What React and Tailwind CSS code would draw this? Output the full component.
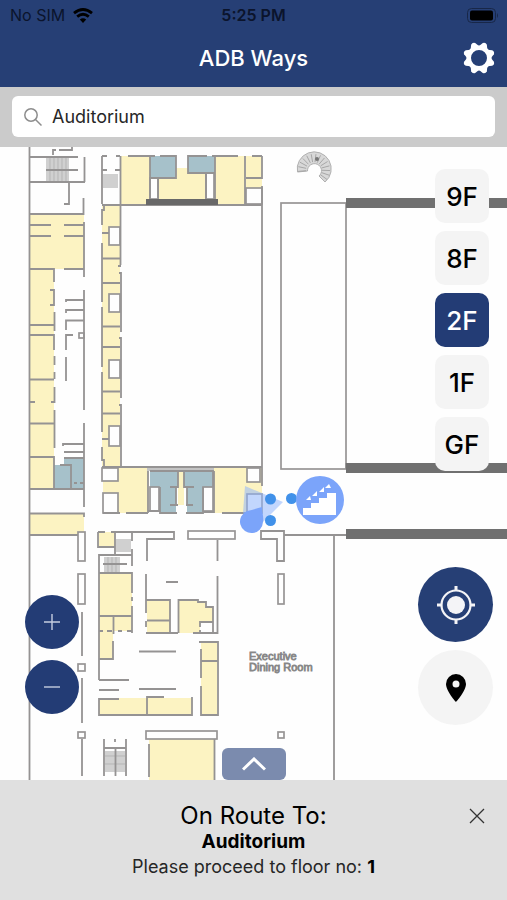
import React, { useState } from "react";

const YELLOW = [
  [30, 214, 54, 55], [30, 269, 24, 219], [30, 514, 54, 21], [102, 206, 18, 261],
  [121, 156, 29, 49], [158, 174, 48, 26], [176, 168, 12, 10], [215, 156, 30, 49], [246, 156, 16, 32],
  [103, 468, 45, 45], [178, 471, 6, 34], [214, 468, 48, 45],
  [99, 532, 16, 15], [99, 573, 33, 58], [99, 631, 14, 28], [99, 698, 93, 17],
  [147, 600, 23, 33], [201, 642, 16, 73], [149, 739, 65, 41],
];

const TEAL = [
  [64, 458, 20, 31], [54, 465, 12, 24], [150, 156, 26, 22], [188, 156, 27, 17],
  [150, 471, 28, 16], [160, 486, 16, 27], [184, 471, 29, 16], [187, 486, 15, 27],
];

const ROOMS = [
  [109, 227, 11, 18], [109, 294, 11, 18], [109, 360, 11, 18], [109, 426, 11, 20],
  [102, 468, 16, 13], [103, 493, 15, 20], [150, 487, 9, 24], [203, 487, 10, 24],
  [247, 468, 13, 14], [247, 494, 15, 19], [150, 178, 8, 21], [206, 173, 8, 26], [246, 188, 16, 16],
  [78, 532, 7, 29], [78, 574, 7, 30], [78, 664, 7, 7], [78, 732, 7, 6],
  [188, 531, 47, 8], [278, 574, 6, 30], [278, 732, 6, 6], [146, 731, 71, 8], [79, 333, 5, 5],
  [281, 203, 65, 266],
];

const STAIRS = [
  [46, 158, 23, 24], [103, 174, 15, 14], [116, 539, 15, 13], [104, 557, 16, 16], [105, 751, 20, 21],
];

const WALLS = [
  "M29.5 147V780 M30 157H78 M84.5 157V182 M30 182H85 M46 170H78 M53 155V150H56 M59 150H72V147 M69 182V204H64",
  "M83.5 198V214H30 M30 225H51 M64 225H84 M30 236H51 M64 236H84 M84 222V277 M30 269H54V282 M64 269H84",
  "M50 290H54V305H50 M54.5 312V331 M30 325H54 M30 335H54V350 M54.5 356V365 M54.5 372V379 M30 379.5H54 M54.5 387V402H51 M30 402H35 M54.5 410V448 M30 423.5H54 M30 457H54V488",
  "M84 290V410 M66 302V300H84 M66 313V310H84 M66 330V320.5H84 M66 350V335H73 M66 357V381 M84 423V507 M63 446V444H84 M64 452H84 M64 458H84 M60 465H71V488 M74 483H77 M80 483H84",
  "M30 489H84 M30 513.5H84V517 M30 535H78",
  "M102 156V204 M102 156H107 M116 156H120 M102 170H107 M115 170H120 M120.5 156V265 M118 266H121 M119 273H121V332 M119 338H121V398 M119 405H121V467",
  "M104 206V210H102V225 M102 243V302 M102 307V367 M102 372V432 M102 447V460H104V467 M102 233H109 M102 258.5H120 M102 283H120 M102 326.5H120 M102 347H120 M102 391.5H120 M102 413.5H120 M102 439H109",
  "M102 205H262 M262 156V178H246 M252 156H262 M262 186V486 M245 156V205 M215 156V199 M215 173H188V156H207 M212 156H238 M128 156H155 M160 156H176V178H150 M150 156V199 M158 178V200 M206 174V200",
  "M102 467H262 M148 471V513 M150 471H213V487 M178 471V487H170 M184 471V487H194 M176 488V505 M170 505H178 M187 488V505 M186 505H193 M160 487V513H177 M186 513H203V487 M214 471V512H203 M148 511H160 M103 513H120 M126 513H148 M222 513H248",
  "M98 532V547H115 M98 532H105 M111 532H115V555 M115 532H174V540 M173 539H147V561 M132 532V541 M132 549V566 M99 680V555H132 M103 564H127 M99 573H132V593 M132 597V601 M132 606V633",
  "M99 616H132 M113.5 616V634 M99 631H103 M107 631H112 M118 631H122 M127 631H132 M113 641V659H99 M99 680H129 M99 690H119 M119 699H99V715H192V697 M147 715V697H164 M139 689H176 M139 651.5H176",
  "M146 574V613 M146 600H170V632 M146 621V627 M147 620.5H170 M146 633H178 M217.5 540V561 M217.5 576V633H193 M166 582H178 M178.5 633V600H198V602H206V607H213V632",
  "M199 642H218V715H201V686 M201 649V678 M201 661H218 M149 744V777 M214.5 739V780",
  "M82 612V656 M82 678V723 M82 739V776 M104 739V776 M126 739V776 M104 748H126 M115.5 748V776 M115 739V742",
  "M261 531H284V561H277V539H261Z M284 535H346 M334 535V780 M346 469V463",
];

const HEAVY_WALLS = [
  [346, 198, 161, 10], [346, 463, 161, 10], [346, 529, 161, 10],
];

function Rects({ items, ...rest }) {
  return (
    <g {...rest}>
      {items.map(([x, y, w, h]) => (
        <rect key={`${x}-${y}`} x={x} y={y} width={w} height={h} />
      ))}
    </g>
  );
}

function FloorPlan() {
  const treads = Array.from({ length: 14 }, (_, i) => ((175 + i * 17) * Math.PI) / 180);
  return (
    <svg
      className="absolute inset-0 h-full w-full"
      viewBox="0 147 507 633"
      preserveAspectRatio="xMidYMid slice"
      role="img"
      aria-label="Floor plan, 2F"
    >
      <Rects items={YELLOW} fill="#fcf3c2" />
      <path d="M179 600H198V602H206V607H213V623H200V633H179Z" fill="#fcf3c2" />
      <Rects items={TEAL} fill="#a6c1ca" />
      <Rects items={STAIRS} fill="#d0d0d0" />
      <g stroke="#b5b5b5" strokeWidth="1">
        <path d="M50 158V182M54 158V182M58 158V182M62 158V182M66 158V182" />
        <path d="M108 557V573M112 557V573M116 557V573M105 756H125M105 764H125" />
      </g>
      <rect x="147" y="468" width="67" height="3" fill="#c4c4c4" />
      <Rects items={ROOMS} fill="#fefefe" stroke="#979595" strokeWidth="1.7" />
      <rect x="200" y="623" width="13" height="9" fill="#fefefe" />
      <g fill="none" stroke="#959393" strokeWidth="1.8">
        <path d="M200 627V622H213M200 630V633" />
        {WALLS.map((d) => (
          <path key={d} d={d} />
        ))}
      </g>
      <rect x="146" y="199" width="72" height="6" fill="#686868" />
      <Rects items={HEAVY_WALLS} fill="#707070" />

      <path d="M297.500 172A17 17 0 1 1 325 182L319 176A7 7 0 1 0 307.500 171Z" fill="#d8d8d8" stroke="#b0b0b0" />
      <g stroke="#a2a2a2" strokeWidth="0.9">
        {treads.map((a) => (
          <line
            key={a}
            x1={314 + Math.cos(a) * 8}
            y1={170 + Math.sin(a) * 8}
            x2={314 + Math.cos(a) * 16}
            y2={170 + Math.sin(a) * 16}
          />
        ))}
      </g>
      <circle cx="317" cy="159" r="2" fill="#777" />

      <g fill="#777" stroke="#888" strokeWidth="0.8" className="font-['Liberation_Sans',sans-serif] text-[11px]">
        <text x="249" y="660">Executive</text>
        <text x="249" y="671">Dining Room</text>
      </g>

      <path d="M245 486L283 502L263 522L243 513Z" fill="#8fb4fb" fillOpacity="0.55" />
      <path d="M262 507C262 513 264 517 263 522A11.500 11.500 0 1 1 247 511C253 510 258 508 262 507Z" fill="#7ba4fa" />
      <g fill="#4191e9">
        <circle cx="270.500" cy="499" r="5.500" />
        <circle cx="270.500" cy="520.500" r="5.500" />
        <circle cx="291.500" cy="498.500" r="5.500" />
      </g>
      <circle cx="320" cy="500" r="24" fill="#7ba4fa" />
      <path d="M303 515V508H311V503H319V498H327V493H336V515Z" fill="#fff" />
      <path d="M306 500L310 496L311 500ZM312 496L317 491L317 496ZM319 492L324 487L324 492ZM325 488L329 484L331 488Z" fill="#fff" />
    </svg>
  );
}

function StatusBar() {
  return (
    <div className="grid h-[30px] grid-cols-3 items-center px-2 text-[16px] leading-5 text-[#0b142c]">
      <span className="flex items-center gap-2 pl-[2px]">
        No SIM
        <svg viewBox="0 0 20 15" className="h-[15px] w-5" aria-hidden="true">
          <path d="M10 15L6.800 11.500Q10 9 13.200 11.500Z" fill="#000" />
          <path d="M4.200 8.600Q10 3.800 15.800 8.600M1 5.200Q10-2.200 19 5.200" fill="none" stroke="#000" strokeWidth="2.800" />
        </svg>
      </span>
      <span className="text-center font-semibold">5:25 PM</span>
      <svg viewBox="0 0 32 15" className="h-[15px] w-8 justify-self-end" aria-label="Battery full">
        <rect x="0.500" y="0.500" width="28" height="14" rx="4" fill="none" stroke="#182748" />
        <rect x="3" y="2.500" width="23" height="10" rx="2" fill="#000" />
        <path d="M30 5Q32 7.500 30 10Z" fill="#182748" />
      </svg>
    </div>
  );
}

function GearIcon() {
  const teeth = [22.5, 67.5, 112.5, 157.5, 202.5, 247.5, 292.5, 337.5];
  return (
    <svg viewBox="-16 -16 32 32" className="h-8 w-8" aria-hidden="true">
      <circle r="10.300" fill="none" stroke="#fff" strokeWidth="4.600" />
      {teeth.map((a) => (
        <path key={a} d="M-4.500-11L-2.200-15.200Q0-17.200 2.200-15.200L4.500-11Z" fill="#fff" transform={`rotate(${a})`} />
      ))}
    </svg>
  );
}

export default function App() {
  const [floor, setFloor] = useState("2F");
  const [query, setQuery] = useState("Auditorium");

  return (
    <div className="flex min-h-screen flex-col bg-[#fefefe] font-['Inter','Liberation_Sans',sans-serif]">
      <header className="bg-[#263f75]">
        <StatusBar />
        <div className="grid h-[57px] grid-cols-[1fr_auto_1fr] items-start px-3 pt-3">
          <h1 className="col-start-2 text-[22px] leading-8 font-medium text-white">ADB Ways</h1>
          <button type="button" aria-label="Settings" className="justify-self-end">
            <GearIcon />
          </button>
        </div>
      </header>

      <form role="search" className="bg-[#cbcbcb] px-3 pt-[9px] pb-[10px]" onSubmit={(e) => e.preventDefault()}>
        <label className="flex h-[41px] items-center gap-[10px] rounded-md bg-white px-3">
          <svg viewBox="0 0 18 18" className="h-[18px] w-[18px] shrink-0" fill="none" stroke="#8d8d8d" strokeWidth="1.500" aria-hidden="true">
            <circle cx="7" cy="7" r="6.200" />
            <path d="M11.500 11.500L17.500 17.500" />
          </svg>
          <input
            type="text"
            aria-label="Search destination"
            value={query}
            onChange={(e) => setQuery(e.target.value)}
            className="min-w-0 flex-1 bg-transparent text-[18px] leading-6 text-[#262626] outline-none"
          />
        </label>
      </form>

      <main className="relative flex flex-1 justify-between overflow-hidden">
        <FloorPlan />

        <div className="relative flex flex-col justify-end gap-[11px] pb-[66px] pl-[25px]">
          <button type="button" aria-label="Zoom in" className="flex h-[54px] w-[54px] items-center justify-center rounded-full bg-[#233c75]">
            <svg viewBox="0 0 16 16" className="h-4 w-4" stroke="#c5cde0" strokeWidth="1.400" aria-hidden="true">
              <path d="M0 8H16M8 0V16" />
            </svg>
          </button>
          <button type="button" aria-label="Zoom out" className="flex h-[54px] w-[54px] items-center justify-center rounded-full bg-[#233c75]">
            <svg viewBox="0 0 16 16" className="h-4 w-4" stroke="#c5cde0" strokeWidth="1.400" aria-hidden="true">
              <path d="M0 8H16" />
            </svg>
          </button>
        </div>

        <button
          type="button"
          aria-label="Show route details"
          className="absolute bottom-0 left-1/2 flex h-8 w-16 -translate-x-1/2 items-center justify-center rounded-md bg-[#7b8bae]"
        >
          <svg viewBox="0 0 24 14" className="h-[14px] w-6" fill="none" stroke="#fff" strokeWidth="3" aria-hidden="true">
            <path d="M1 12.500L12 2L23 12.500" />
          </svg>
        </button>

        <div className="relative flex flex-col justify-between pt-[22px] pr-[14px] pb-[55px]">
          <div className="flex flex-col items-end gap-2 pr-1">
            {["9F", "8F", "2F", "1F", "GF"].map((name) => (
              <button
                key={name}
                type="button"
                aria-pressed={floor === name}
                onClick={() => setFloor(name)}
                className={`h-[54px] w-[54px] rounded-[10px] pt-[2px] text-[26px] leading-8 font-medium ${
                  floor === name ? "bg-[#233c75] text-white" : "bg-[#f4f4f4] text-black"
                }`}
              >
                {name}
              </button>
            ))}
          </div>
          <div className="flex flex-col gap-2">
            <button type="button" aria-label="My location" className="flex h-[75px] w-[75px] items-center justify-center rounded-full bg-[#263f75]">
              <svg viewBox="0 0 38 38" className="h-[38px] w-[38px]" fill="none" stroke="#f4f4f7" strokeWidth="2.200" aria-hidden="true">
                <circle cx="19" cy="19" r="14.500" />
                <path d="M19 0V5M19 33V38M0 19H5M33 19H38" strokeWidth="3" />
                <circle cx="19" cy="19" r="9" fill="#f4f4f7" stroke="none" />
              </svg>
            </button>
            <button type="button" aria-label="Drop pin" className="flex h-[75px] w-[75px] items-center justify-center rounded-full bg-[#f4f4f4]">
              <svg viewBox="0 0 20 28" className="h-7 w-5" aria-hidden="true">
                <path fillRule="evenodd" d="M10 0A10 10 0 0 0 0 10C0 17 10 28 10 28S20 17 20 10A10 10 0 0 0 10 0ZM10 6.500A3.500 3.500 0 1 1 10 13.500A3.500 3.500 0 1 1 10 6.500Z" />
              </svg>
            </button>
          </div>
        </div>
      </main>

      <section className="grid grid-cols-[1fr_auto_1fr] items-start bg-[#e0e0e0] pt-[22px] pb-5 text-center text-black">
        <div className="col-start-2">
          <h2 className="text-[24px] leading-7">On Route To:</h2>
          <p className="text-[19px] leading-6 font-bold">Auditorium</p>
          <p className="text-[18px] leading-[26px] text-[#262626]">
            Please proceed to floor no: <strong className="font-bold text-black">1</strong>
          </p>
        </div>
        <button type="button" aria-label="Cancel route" className="mt-[6px] mr-[22px] justify-self-end">
          <svg viewBox="0 0 16 16" className="h-4 w-4" stroke="#333" strokeWidth="1.300" aria-hidden="true">
            <path d="M1 1L15 15M15 1L1 15" />
          </svg>
        </button>
      </section>
    </div>
  );
}
